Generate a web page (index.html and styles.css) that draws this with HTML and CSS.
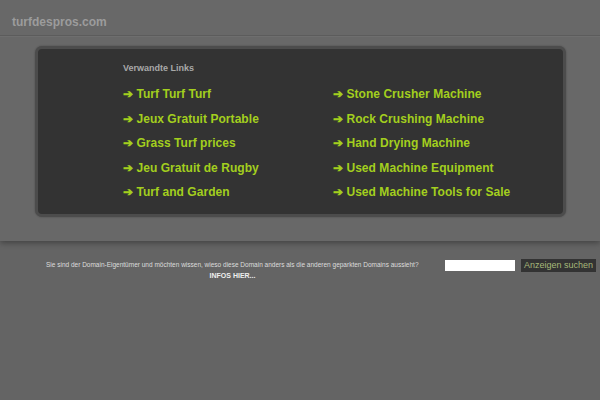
FILE: index.html
```html
<!DOCTYPE html>
<html>
<head>
<meta charset="utf-8">
<link rel="stylesheet" href="styles.css">
</head>
<body>
<div class="top">
  <div class="header">turfdespros.com</div>
  <div class="panel">
    <div class="panel-inner">
      <div class="heading">Verwandte Links</div>
      <div class="links">
        <a class="link" href="#">➔ Turf Turf Turf</a>
        <a class="link" href="#">➔ Stone Crusher Machine</a>
        <a class="link" href="#">➔ Jeux Gratuit Portable</a>
        <a class="link" href="#">➔ Rock Crushing Machine</a>
        <a class="link" href="#">➔ Grass Turf prices</a>
        <a class="link" href="#">➔ Hand Drying Machine</a>
        <a class="link" href="#">➔ Jeu Gratuit de Rugby</a>
        <a class="link" href="#">➔ Used Machine Equipment</a>
        <a class="link" href="#">➔ Turf and Garden</a>
        <a class="link" href="#">➔ Used Machine Tools for Sale</a>
      </div>
    </div>
  </div>
</div>
<div class="bottom">
  <div class="info">
    <div class="info-text">Sie sind der Domain-Eigentümer und möchten wissen, wieso diese Domain anders als die anderen geparkten Domains aussieht?</div>
    <div class="info-link">INFOS HIER...</div>
  </div>
  <form class="search">
    <input class="search-input" type="text">
    <button class="search-btn" type="button">Anzeigen suchen</button>
  </form>
</div>
</body>
</html>
```
FILE: styles.css
```css
html, body {
  margin: 0;
  padding: 0;
  background: #646464;
  font-family: "Liberation Sans", Arial, sans-serif;
}
.top {
  background: #686868;
  height: 241px;
  box-shadow: 0 2px 6px rgba(0,0,0,0.35);
  position: relative;
}
.header {
  height: 36px;
  box-sizing: border-box;
  padding: 15px 0 0 12px;
  font-size: 12px;
  font-weight: bold;
  color: #9c9c9c;
  border-bottom: 1px solid #5c5c5c;
  box-shadow: 0 1px 0 #6e6e6e;
}
.panel {
  margin: 10px 34px 0 35px;
  height: 171px;
  box-sizing: border-box;
  border: 3px solid #4c4c4c;
  border-radius: 7px;
  background: #333333;
  box-shadow: 0 0 2px rgba(0,0,0,0.3);
}
.panel-inner {
  padding: 14px 0 0 85px;
}
.heading {
  font-size: 9px;
  font-weight: bold;
  color: #a8a8a8;
  height: 14px;
}
.links {
  display: grid;
  grid-template-columns: 210px 200px;
  grid-auto-rows: 24.5px;
  margin-top: 7px;
}
.link {
  font-size: 12px;
  font-weight: bold;
  color: #a3cf1e;
  text-decoration: none;
  line-height: 20px;
  white-space: nowrap;
  letter-spacing: 0.05px;
}
.bottom {
  display: flex;
  align-items: flex-start;
  padding-top: 18px;
}
.info {
  width: 372px;
  margin-left: 46px;
  text-align: center;
  color: #dddddd;
}
.info-text {
  font-size: 6.5px;
  line-height: 11px;
  white-space: nowrap;
}
.info-link {
  font-size: 7px;
  font-weight: bold;
  line-height: 11px;
  color: #eeeeee;
  padding-left: 1px;
}
.search {
  display: flex;
  margin: 0 0 0 27px;
  gap: 6px;
}
.search-input {
  width: 70px;
  height: 11px;
  margin-top: 1px;
  box-sizing: border-box;
  border: none;
  background: #ffffff;
  padding: 0;
}
.search-btn {
  height: 13px;
  padding: 0 3px;
  border: none;
  background: #333333;
  color: #a6b97a;
  font-family: "Liberation Sans", Arial, sans-serif;
  font-size: 9px;
  line-height: 13px;
}
```
